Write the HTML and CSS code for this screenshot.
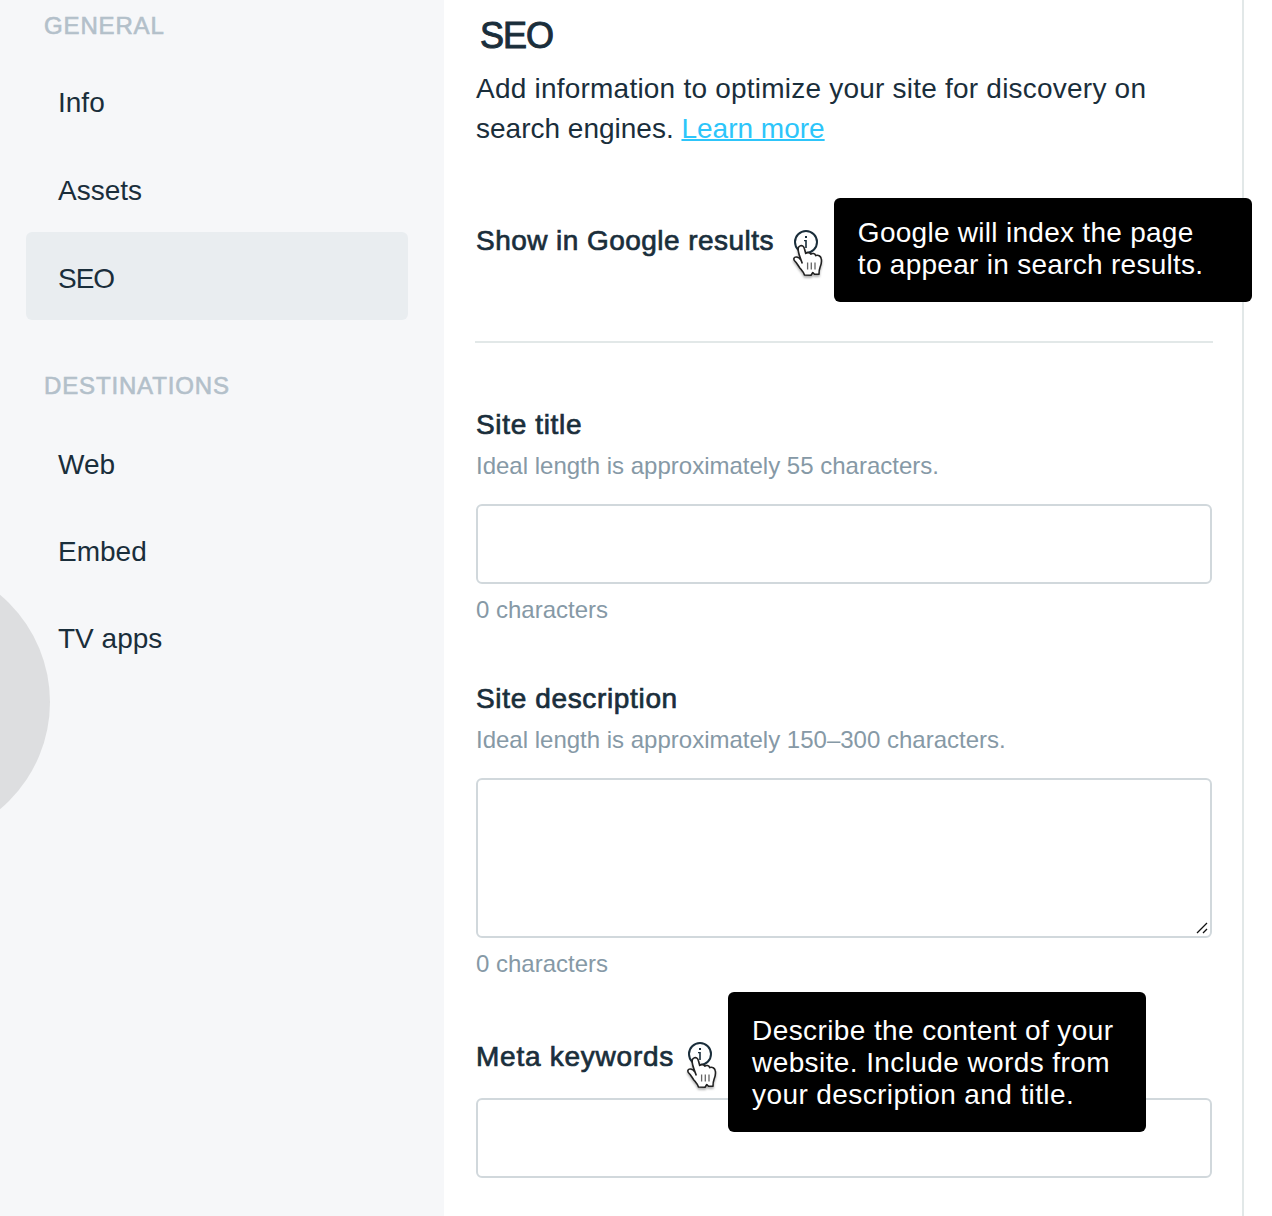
FILE: index.html
```html
<!DOCTYPE html>
<html lang="en">
<head>
    <meta charset="UTF-8">
    <meta name="viewport" content="width=device-width, initial-scale=1.0">
    <title>SEO Settings</title>
    <link rel="stylesheet" href="styles.css">
</head>
<body>
    <!-- Shared icons -->
    <svg class="icon-defs" width="0" height="0">
        <symbol id="icon-info" viewBox="0 0 24 24">
            <circle cx="12" cy="12" r="11" fill="none" stroke="#1a2e3b" stroke-width="2"/>
            <path d="M11 6h2v2h-2zM10 10h2.800v8h-1.600v-6.800h-1.200z" fill="#1a2e3b"/>
        </symbol>
        <symbol id="icon-hand" viewBox="0 0 32 36">
            <path d="M10.300 20.500 C9.500 18 7.300 13 6.600 9.500 C5.600 5.500 6.300 3.200 8.500 2.700 C10.500 2.200 12 3.600 12.500 6 L13.700 10.500 C15 9.300 17.800 9.300 18.800 11.200 C20.300 10 22.800 10.300 23.800 12.600 C26.200 11.700 28.600 13 29.200 15.500 C30 18.500 29.200 21.500 28 24.500 C27 27 27 29 27 31.300 L22.500 31.300 L20.800 29.500 L19 32.300 L12.500 32 C11.500 28.800 9.500 27 7.500 24.500 C6 22.500 5 20 2.800 18 C1.200 16.300 1.700 14.300 3.700 14 C6 13.600 7.700 15 9.300 17.600" fill="#fff" stroke="#222" stroke-width="1.600" stroke-linejoin="round"/>
            <path d="M15.600 19.500v7M19.300 19.500v7M23 19.500v7" stroke="#666" stroke-width="1.300"/>
        </symbol>
    </svg>

    <div class="page">
        <div class="sidebar">
            <div class="handle"></div>
            <h3>General</h3>
            <ul class="menu">
                <li>Info</li>
                <li>Assets</li>
                <li class="selected">SEO</li>
            </ul>
            <h3>Destinations</h3>
            <ul class="menu destinations">
                <li>Web</li>
                <li>Embed</li>
                <li>TV apps</li>
            </ul>
        </div>

        <div class="content">
            <h1>SEO</h1>
            <p class="lead"><span class="lead-line">Add information to optimize your site for discovery on</span> search engines. <a href="#">Learn more</a></p>

            <div class="field-title google">
                <span>Show in Google results</span>
                <div class="info">
                    <svg class="info-icon"><use href="#icon-info"/></svg>
                    <svg class="hand"><use href="#icon-hand"/></svg>
                    <div class="tooltip">Google will index the page<br>to appear in search results.</div>
                </div>
            </div>

            <hr>

            <div class="field">
                <label class="field-title" for="site-title">Site title</label>
                <p class="hint">Ideal length is approximately 55 characters.</p>
                <input type="text" id="site-title">
                <p class="count">0 characters</p>
            </div>

            <div class="field">
                <label class="field-title" for="site-description">Site description</label>
                <p class="hint">Ideal length is approximately 150–300 characters.</p>
                <div class="textarea-wrap">
                    <textarea id="site-description"></textarea>
                    <svg class="grip" viewBox="0 0 12 12"><path d="M1 11L11 1M7 11L11 7" stroke="#111" stroke-width="1.300"/></svg>
                </div>
                <p class="count">0 characters</p>
            </div>

            <div class="field">
                <div class="field-title meta">
                    <label for="keywords">Meta keywords</label>
                    <div class="info">
                        <svg class="info-icon"><use href="#icon-info"/></svg>
                        <svg class="hand"><use href="#icon-hand"/></svg>
                        <div class="tooltip">Describe the content of your<br>website. Include words from<br>your description and title.</div>
                    </div>
                </div>
                <input type="text" id="keywords">
            </div>
        </div>
    </div>
</body>
</html>
```
FILE: styles.css
```css
/* Basic reset */
* {
    margin: 0;
    padding: 0;
    box-sizing: border-box;
}

body {
    font-family: "Helvetica Neue", "Liberation Sans", Arial, sans-serif;
    font-size: 28px;
    color: #1a2e3b;
    background-color: #fff;
}

.icon-defs {
    position: absolute;
}

.page {
    display: flex;
    height: 1216px;
    overflow: hidden;
}

/* Sidebar */
.sidebar {
    position: relative;
    width: 444px;
    padding: 10px 36px 0 26px;
    background-color: #f6f7f9;
    overflow: hidden;
}

.sidebar h3 {
    padding-left: 18px;
    font-size: 24px;
    font-weight: normal;
    line-height: 32px;
    letter-spacing: 0.85px;
    text-transform: uppercase;
    color: #b3c0ca;
    -webkit-text-stroke: 0.6px #b3c0ca;
}

.menu {
    list-style-type: none;
    margin: 14px 0 50px;
}

.menu li {
    height: 88px;
    padding: 0 32px;
    line-height: 94px;
    border-radius: 6px;
}

.menu li.selected {
    letter-spacing: -1px;
    background-color: #e9edf0;
}

.destinations {
    margin-top: 16px;
}

.destinations li {
    height: 87px;
}

/* Round drag handle cut off by the left edge */
.handle {
    position: absolute;
    left: -230px;
    top: 562px;
    width: 280px;
    height: 280px;
    border-radius: 50%;
    background-color: #dddee0;
}

/* Main column */
.content {
    width: 800px;
    padding: 12px 30px 0 32px;
    border-right: 2px solid #e2e8e8;
}

h1 {
    padding-left: 4px;
    margin-bottom: 9px;
    font-size: 36px;
    font-weight: normal;
    line-height: 48px;
    letter-spacing: -1px;
    -webkit-text-stroke: 1px #1a2e3b;
}

.lead {
    line-height: 40px;
}

.lead-line {
    letter-spacing: 0.22px;
}

.lead a {
    color: #2dc5fa;
    text-underline-offset: 1px;
    text-decoration-thickness: 2px;
    text-decoration-skip-ink: none;
}

hr {
    margin: 81px -1px 61px;
    border: none;
    border-top: 2px solid #e2e8e8;
}

/* Fields */
.field {
    margin-bottom: 52px;
}

.field-title {
    display: flex;
    align-items: center;
    height: 40px;
    line-height: 40px;
    padding-top: 2px;
    letter-spacing: 0.65px;
    -webkit-text-stroke: 0.7px #1a2e3b;
}

.google {
    margin-top: 71px;
    letter-spacing: 0.45px;
}

.meta {
    margin: 56px 0 22px;
    letter-spacing: 0.75px;
}

.hint,
.count {
    font-size: 24px;
    line-height: 32px;
    color: #8699a6;
}

.hint {
    margin: 6px 0 22px;
}

.count {
    margin-top: 10px;
}

input,
textarea {
    display: block;
    width: 100%;
    height: 80px;
    padding: 0 16px;
    border: 2px solid #d1d8dc;
    border-radius: 6px;
    font: inherit;
    background-color: #fff;
    outline: none;
}

textarea {
    height: 160px;
    resize: none;
}

.textarea-wrap {
    position: relative;
}

.grip {
    position: absolute;
    right: 4px;
    bottom: 4px;
    width: 12px;
    height: 12px;
}

/* Info icon with its pointer and tooltip */
.info {
    position: relative;
    width: 24px;
    height: 24px;
    margin-left: 20px;
    top: 1px;
}

.meta .info {
    margin-left: 14px;
    top: -3px;
}

.info-icon {
    display: block;
    width: 24px;
    height: 24px;
}

.hand {
    position: absolute;
    left: -2px;
    top: 13px;
    width: 32px;
    height: 36px;
    filter: drop-shadow(0 2px 1px rgba(0, 0, 0, 0.3));
}

.tooltip {
    position: absolute;
    left: 40px;
    top: -32px;
    width: 418px;
    padding: 19px 24px 21px;
    border-radius: 6px;
    line-height: 32px;
    letter-spacing: 0.28px;
    white-space: nowrap;
    color: #fff;
    background-color: #000;
    -webkit-text-stroke: 0;
}

.meta .tooltip {
    top: -50px;
    padding-top: 23px;
    letter-spacing: 0.4px;
}
```
